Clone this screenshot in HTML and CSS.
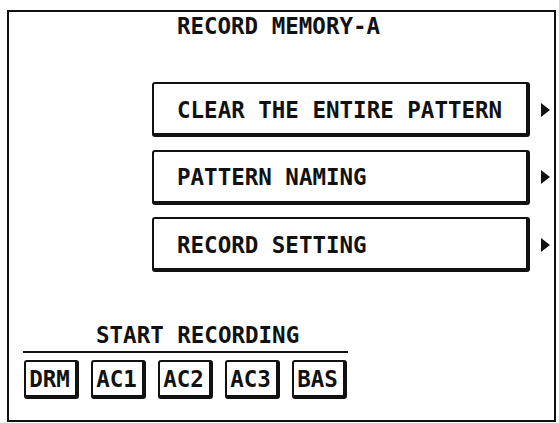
FILE: index.html
```html
<!DOCTYPE html>
<html lang="en">
<head>
  <meta charset="UTF-8" />
  <title>Record Memory-A</title>
  <link rel="stylesheet" href="styles.css">
</head>
<body>

  <div class="screen">
    <div class="screen-title">RECORD MEMORY-A</div>

    <div class="menu">
      <div class="menu-row">
        <button class="menu-btn">CLEAR THE ENTIRE PATTERN</button>
        <svg class="arrow" width="10" height="14" viewBox="0 0 10 14"><polygon points="0,0 9,7 0,14" /></svg>
      </div>
      <div class="menu-row">
        <button class="menu-btn">PATTERN NAMING</button>
        <svg class="arrow" width="10" height="14" viewBox="0 0 10 14"><polygon points="0,0 9,7 0,14" /></svg>
      </div>
      <div class="menu-row">
        <button class="menu-btn">RECORD SETTING</button>
        <svg class="arrow" width="10" height="14" viewBox="0 0 10 14"><polygon points="0,0 9,7 0,14" /></svg>
      </div>
    </div>

    <div class="record">
      <div class="record-title">START RECORDING</div>
      <div class="record-parts">
        <button class="part-btn">DRM</button>
        <button class="part-btn">AC1</button>
        <button class="part-btn">AC2</button>
        <button class="part-btn">AC3</button>
        <button class="part-btn">BAS</button>
      </div>
    </div>
  </div>

</body>
</html>
```

FILE: styles.css
```css
:root {
  --lcd-ink: #111;
  --lcd-bg: #fff;
}

body {
  margin: 0;
  background: var(--lcd-bg);
  color: var(--lcd-ink);
  font-family: "DejaVu Sans Mono", "Liberation Mono", monospace;
  font-weight: bold;
  font-size: 22.5px;
  line-height: 22px;
}

.screen {
  box-sizing: border-box;
  width: 549px;
  height: 412px;
  margin: 10px 0 0 7px;
  border: 2px solid var(--lcd-ink);
  display: flex;
  flex-direction: column;
}

.screen-title {
  text-align: center;
  padding-top: 3px;
  padding-right: 6px;
}

.menu {
  display: flex;
  flex-direction: column;
  gap: 12.5px;
  margin-top: 45px;
  margin-left: 143px;
}

.menu-row {
  display: flex;
  align-items: center;
  gap: 11px;
}

.menu-btn,
.part-btn {
  box-sizing: border-box;
  display: flex;
  align-items: center;
  background: var(--lcd-bg);
  color: var(--lcd-ink);
  font: inherit;
  border-style: solid;
  border-color: var(--lcd-ink);
  border-width: 2px 4px 4px 2px;
  border-radius: 3px;
  padding: 0;
  cursor: pointer;
}

.menu-btn {
  width: 378px;
  height: 55px;
  padding-left: 23px;
  padding-top: 2px;
}

.arrow {
  fill: var(--lcd-ink);
}

.record {
  margin-top: 52px;
  margin-left: 14px;
}

.record-title {
  width: 325px;
  padding: 0 0 5px 73px;
  box-sizing: border-box;
  border-bottom: 2px solid var(--lcd-ink);
}

.record-parts {
  display: flex;
  gap: 12px;
  margin-top: 7px;
  margin-left: 1px;
}

.part-btn {
  width: 55px;
  height: 39px;
  justify-content: center;
  padding-right: 2px;
}
```
